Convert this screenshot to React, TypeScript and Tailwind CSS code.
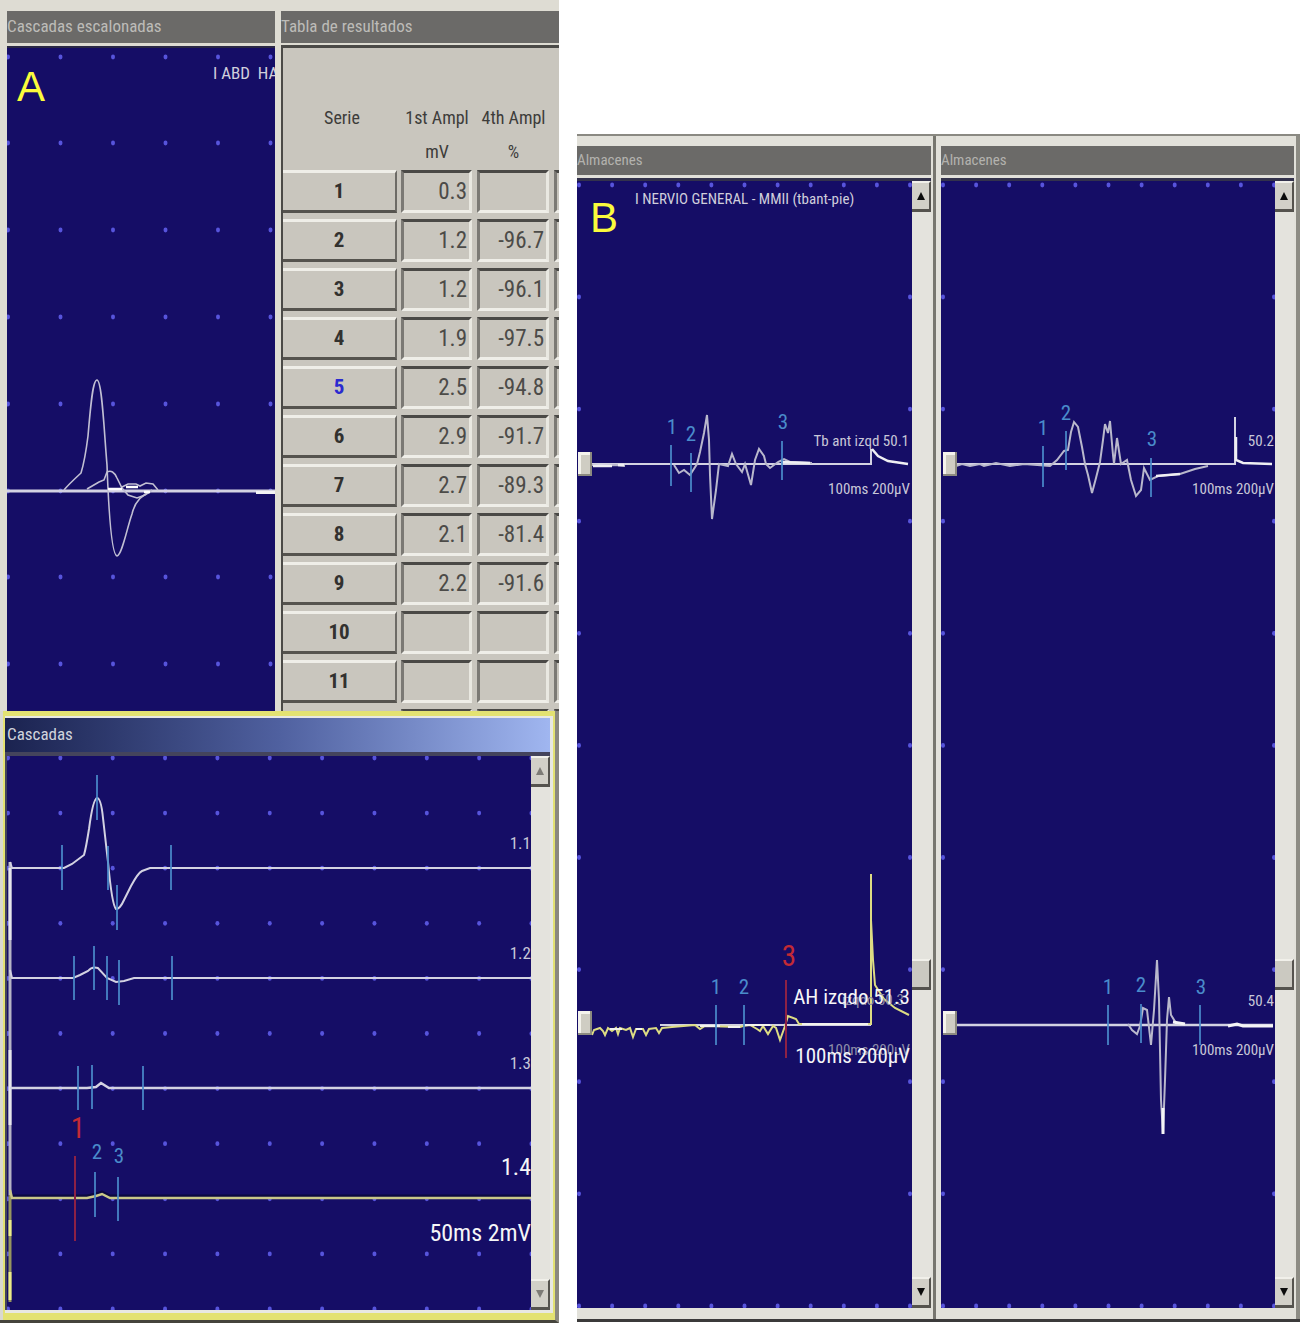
import type { ReactNode } from "react";

import { clsx } from "clsx";

const TRACE = "#d3d2e2";
const MARKER = "#4a8ccb";

const results = [
  { serie: 1, first: "0.3", fourth: "" },
  { serie: 2, first: "1.2", fourth: "-96.7" },
  { serie: 3, first: "1.2", fourth: "-96.1" },
  { serie: 4, first: "1.9", fourth: "-97.5" },
  { serie: 5, first: "2.5", fourth: "-94.8" },
  { serie: 6, first: "2.9", fourth: "-91.7" },
  { serie: 7, first: "2.7", fourth: "-89.3" },
  { serie: 8, first: "2.1", fourth: "-81.4" },
  { serie: 9, first: "2.2", fourth: "-91.6" },
  { serie: 10, first: "", fourth: "" },
  { serie: 11, first: "", fourth: "" },
];

function range(start: number, step: number, count: number) {
  return Array.from({ length: count }, (_, i) => start + step * i);
}

function Dots({ xs, ys }: { xs: number[]; ys: number[] }) {
  return (
    <g fill="#5754dc">
      {ys.map((y) =>
        xs.map((x) => (
          <ellipse key={`${x}-${y}`} cx={x} cy={y} rx="2" ry="2.4" />
        )),
      )}
    </g>
  );
}

// [x, top, bottom]
function Markers({ items }: { items: [number, number, number][] }) {
  return (
    <g stroke={MARKER} strokeWidth="2" strokeOpacity="0.85">
      {items.map(([x, top, bottom]) => (
        <path key={`${x}-${top}`} d={`M${x} ${top}V${bottom}`} />
      ))}
    </g>
  );
}

interface LabelProps {
  x: number;
  y: number;
  size?: "xs" | "sm" | "md" | "lg" | "xl";
  fill?: string;
  anchor?: "start" | "middle" | "end";
  children: ReactNode;
}

function Label({
  x,
  y,
  size = "sm",
  fill = "#c8c7d8",
  anchor = "start",
  children,
}: LabelProps) {
  return (
    <text
      x={x}
      y={y}
      fill={fill}
      textAnchor={anchor}
      className={clsx(
        size === "xs" && "text-[15px]",
        size === "sm" && "text-[17px]",
        size === "md" && "text-[21px]",
        size === "lg" && "text-[24px]",
        size === "xl" && "text-[29px]",
      )}
    >
      {children}
    </text>
  );
}

function PanelLetter({
  x,
  y,
  children,
}: {
  x: number;
  y: number;
  children: string;
}) {
  return (
    <text
      x={x}
      y={y}
      fill="#fbfb3c"
      className="font-['Liberation_Sans',sans-serif] text-[42px]"
    >
      {children}
    </text>
  );
}

function Handle({ x, y }: { x: number; y: number }) {
  return (
    <g>
      <rect x={x} y={y} width="14" height="24" fill="#8c8a80" />
      <rect x={x} y={y} width="12" height="22" fill="#f4f3ec" />
      <rect x={x + 3} y={y + 3} width="9" height="19" fill="#cfcdc3" />
    </g>
  );
}

function Plot({
  viewBox,
  label,
  children,
}: {
  viewBox: string;
  label: string;
  children: ReactNode;
}) {
  return (
    <svg
      viewBox={viewBox}
      role="img"
      aria-label={label}
      className="block h-auto w-full min-w-0 flex-1 bg-[#150d66]"
      fill="none"
    >
      {children}
    </svg>
  );
}

function TitleBar({
  className,
  children,
}: {
  className: string;
  children: ReactNode;
}) {
  return (
    <h2
      className={clsx(
        "flex items-center overflow-hidden whitespace-nowrap",
        className,
      )}
    >
      {children}
    </h2>
  );
}

function ArrowButton({
  direction,
  muted,
}: {
  direction: "up" | "down";
  muted?: boolean;
}) {
  return (
    <button
      type="button"
      aria-label={direction === "up" ? "Subir" : "Bajar"}
      className="flex h-[31px] w-full shrink-0 items-center justify-center border-t-2 border-r-2 border-b-3 border-t-[#f1f0ea] border-r-[#55534e] border-b-[#55534e] bg-[#d2d0c8]"
    >
      <svg viewBox="0 0 10 10" className="h-[10px] w-[10px]">
        <path
          d={direction === "up" ? "M5 1L9 9H1Z" : "M5 9L9 1H1Z"}
          fill={muted ? "#7d7b76" : "#0c0c0c"}
        />
      </svg>
    </button>
  );
}

function ScrollBar({ thumb, muted }: { thumb?: boolean; muted?: boolean }) {
  return (
    <div className="flex w-[19px] shrink-0 flex-col bg-[#e4e3dd]">
      <ArrowButton direction="up" muted={muted} />
      <div className="grow-[749]" />
      {thumb && (
        <button
          type="button"
          aria-label="Desplazar"
          className="h-[31px] w-full border-t-2 border-r-2 border-b-3 border-t-[#f1f0ea] border-r-[#55534e] border-b-[#55534e] bg-[#cbc9c1]"
        />
      )}
      <div className="grow-[288]" />
      <ArrowButton direction="down" muted={muted} />
    </div>
  );
}

function SteppedWindow() {
  return (
    <section className="pt-[11px] pr-[3px] pl-[7px]">
      <TitleBar className="h-8 bg-[#6b6a68] text-[17px] text-[#bdbcb8]">
        Cascadas escalonadas
      </TitleBar>
      <div className="mt-[3px] flex border-t-2 border-[#2a2845]">
        <Plot viewBox="7 48 268 663" label="Cascadas escalonadas">
          <Dots
            xs={range(8, 52.5, 6)}
            ys={[57, 143, 230, 317, 404, 491, 577, 664]}
          />
          <path d="M7 491H275" stroke={TRACE} strokeWidth="3" />
          <path d="M256 492.500H275" stroke="#f2f2f5" strokeWidth="3" />
          <g stroke="#c1bfd3" strokeWidth="1.6">
            <path d="M64 490Q68 485 81 473Q85 460 88 436C91 400 93 380 97 380C102 380 104 430 107 465C109 520 112 555 117 556C122 555 127 528 132 514Q136 497 150 492" />
            <path d="M87 489L99 482L104 480L107 472Q113 469 117 478L122 488L128 495L137 498L145 495L152 490" />
            <path d="M122 487L128 484H136L140 486L146 483L153 484L158 490" />
          </g>
          <path
            d="M108 489H122M126 487H138M144 492H150"
            stroke="#ffffff"
            strokeWidth="2.5"
          />
          <Label x={213} y={79} fill="#d0cfdc">
            I ABD&nbsp; HA
          </Label>
          <PanelLetter x={17} y={101}>
            A
          </PanelLetter>
        </Plot>
      </div>
    </section>
  );
}

function ValueCell({ children }: { children?: ReactNode }) {
  return (
    <td className="h-[49px] p-0 pr-[5px] pb-[6px] align-top">
      <div className="h-[43px] border-3 border-t-[#4a4946] border-r-[#e9e8e1] border-b-[#efeee8] border-l-[#7b7974] pr-[2px] text-right text-[23px] leading-[38px] text-[#4c4b48]">
        {children}
      </div>
    </td>
  );
}

function ResultsWindow() {
  return (
    <section className="flex min-w-0 flex-col pt-[11px] pl-[3px]">
      <TitleBar className="h-8 bg-[#6b6a68] text-[17px] text-[#bdbcb8]">
        Tabla de resultados
      </TitleBar>
      <div className="mt-[2px] flex-1 overflow-hidden border-t-3 border-l-2 border-[#4b4a47] bg-[#c9c6be] contain-size">
        <table className="w-[348px] table-fixed border-collapse">
          <colgroup>
            <col className="w-[118px]" />
            <col className="w-[76px]" />
            <col className="w-[77px]" />
            <col className="w-[77px]" />
          </colgroup>
          <thead>
            <tr className="h-[122px] text-[18px] leading-[34px] text-[#3d3c3a]">
              <th className="pt-[53px] align-top font-normal">Serie</th>
              <th className="pt-[53px] pr-1 align-top font-normal whitespace-nowrap">
                1st Ampl
                <br />
                mV
              </th>
              <th className="pt-[53px] pr-1 align-top font-normal whitespace-nowrap">
                4th Ampl
                <br />%
              </th>
              <th />
            </tr>
          </thead>
          <tbody>
            {results.map(({ serie, first, fourth }) => (
              <tr key={serie}>
                <th className="h-[49px] p-0 pr-1 pb-[6px] align-top">
                  <button
                    type="button"
                    className={clsx(
                      "block h-[43px] w-full border-t-3 border-r-2 border-b-3 border-t-[#efeee8] border-r-[#6d6b66] border-b-[#55534e] text-[21px] font-bold",
                      serie === 5 ? "text-[#2a2ad0]" : "text-[#32312f]",
                    )}
                  >
                    {serie}
                  </button>
                </th>
                <ValueCell>{first}</ValueCell>
                <ValueCell>{fourth}</ValueCell>
                <ValueCell />
              </tr>
            ))}
            <tr>
              <th />
              <ValueCell />
              <ValueCell />
              <ValueCell />
            </tr>
          </tbody>
        </table>
      </div>
    </section>
  );
}

function CascadeWindow() {
  return (
    <section className="border-r-4 border-b-3 border-r-[#8b897f] border-b-[#45443c] bg-[#d9d8d0] pl-[3px]">
      <div className="border-x-2 border-t-5 border-b-7 border-[#e3e272] bg-[#e8e8e2] pt-[2px] pr-[3px] pb-[3px]">
        <TitleBar className="h-[34px] bg-linear-to-r from-[#1b2350] via-[#4f609f] to-[#a0b6f0] pl-[2px] text-[17px] text-[#d0d3dc]">
          Cascadas
        </TitleBar>
        <div className="flex border-t-4 border-l-2 border-[#44445c]">
          <Plot viewBox="7 756 524 554" label="Cascadas">
            <Dots xs={range(8, 52.35, 11)} ys={range(758, 55.1, 11)} />
            <path d="M10 862V1195" stroke="#b5b4c6" strokeWidth="3" />
            <path
              d="M10 868V940M10 1050V1125"
              stroke="#e6e6ec"
              strokeWidth="3"
            />
            <path d="M10 1195V1302" stroke="#96955f" strokeWidth="3" />
            <path
              d="M10 1220V1236M10 1272V1300"
              stroke="#ecec8a"
              strokeWidth="3"
            />
            <path
              d="M10 862L12 868H64L72 864L84 855Q86 848 89 829Q93 799 97 798Q101 798 103 818L108 862Q112 905 116 909Q120 909 124 900L131 886Q138 873 142 871L150 868H531"
              stroke={TRACE}
              strokeWidth="2"
            />
            <path
              d="M10 970L12 978H73L80 975L88 971Q92 966 98 968L107 978L116 982L124 981L134 978H531"
              stroke={TRACE}
              strokeWidth="2"
            />
            <path
              d="M10 1088H87L96 1087L101 1083L109 1088H531"
              stroke={TRACE}
              strokeWidth="2.5"
            />
            <path
              d="M12 1196H87L96 1194L102 1192L110 1196H531"
              stroke="#0b0840"
              strokeWidth="3"
            />
            <path
              d="M10 1190L12 1198H87L96 1196L102 1194L110 1198H531"
              stroke="#cac889"
              strokeWidth="2.5"
            />
            <Markers
              items={[
                [62, 845, 890],
                [97, 775, 820],
                [108, 846, 890],
                [117, 885, 930],
                [171, 845, 890],
                [74, 956, 1000],
                [94, 946, 990],
                [107, 956, 1000],
                [119, 960, 1005],
                [172, 956, 1000],
                [78, 1066, 1110],
                [92, 1065, 1109],
                [143, 1066, 1110],
                [95, 1172, 1217],
                [118, 1177, 1221],
              ]}
            />
            <path d="M75 1156V1241" stroke="#8d2145" strokeWidth="2" />
            <Label x={78} y={1138} size="xl" fill="#c32a35" anchor="middle">
              1
            </Label>
            <Label x={97} y={1159} size="md" fill={MARKER} anchor="middle">
              2
            </Label>
            <Label x={119} y={1163} size="md" fill={MARKER} anchor="middle">
              3
            </Label>
            <Label x={531} y={849} anchor="end">
              1.1
            </Label>
            <Label x={531} y={959} anchor="end">
              1.2
            </Label>
            <Label x={531} y={1069} anchor="end">
              1.3
            </Label>
            <Label x={531} y={1175} size="lg" fill="#f6f6f8" anchor="end">
              1.4
            </Label>
            <Label x={531} y={1241} size="lg" fill="#f6f6f8" anchor="end">
              50ms 2mV
            </Label>
          </Plot>
          <ScrollBar muted />
        </div>
      </div>
    </section>
  );
}

function StoreWindow({
  viewBox,
  label,
  className,
  children,
}: {
  viewBox: string;
  label: string;
  className: string;
  children: ReactNode;
}) {
  return (
    <section
      className={clsx("bg-[#e2e1da] pt-[10px] pr-[2px] pb-[11px]", className)}
    >
      <TitleBar className="h-[29px] bg-[#6b6a68] text-[15px] text-[#b3b2ae]">
        Almacenes
      </TitleBar>
      <div className="mt-[3px] flex border-t-3 border-[#33324c]">
        <Plot viewBox={viewBox} label={label}>
          {children}
        </Plot>
        <ScrollBar thumb />
      </div>
    </section>
  );
}

function StoreDots({ x }: { x: number }) {
  return (
    <>
      <Dots xs={range(x, 33.1, 11)} ys={[185, 1306]} />
      <Dots xs={[x, x + 331]} ys={range(297, 112.1, 9)} />
    </>
  );
}

function LeftStore() {
  return (
    <StoreWindow
      viewBox="577 181 335 1127"
      label="Almacenes, lado izquierdo"
      className="border-r-3 border-[#77766f]"
    >
      <StoreDots x={579} />
      <Label x={635} y={204} size="xs" fill="#d0cfdc">
        I NERVIO GENERAL - MMII (tbant-pie)
      </Label>
      <PanelLetter x={590} y={232}>
        B
      </PanelLetter>

      <Label x={909} y={446} size="xs" anchor="end">
        Tb ant izqd 50.1
      </Label>
      <Label x={910} y={494} size="xs" anchor="end">
        100ms 200µV
      </Label>
      <path d="M592 464H871V449" stroke={TRACE} strokeWidth="2" />
      <path
        d="M592 465L600 466L615 465L625 466M674 465L679 473L684 470L690 475L697 464L700 452L704 433L707 415L709 440L710 475L712 519L716 490L719 464L728 466L732 454L736 464L742 472L745 464L751 485L755 460L759 449L764 456L766 464L770 468L778 462L784 459L790 462L812 463"
        stroke="#b9b8cc"
        strokeWidth="2"
      />
      <path
        d="M593 466H612M618 465H624M781 462L810 463M872 449L878 456L888 461L908 464"
        stroke="#efeff3"
        strokeWidth="2.5"
      />
      <Markers
        items={[
          [671, 445, 486],
          [691, 453, 492],
          [782, 441, 480],
        ]}
      />
      <Label x={672} y={434} size="md" fill={MARKER} anchor="middle">
        1
      </Label>
      <Label x={691} y={441} size="md" fill={MARKER} anchor="middle">
        2
      </Label>
      <Label x={783} y={429} size="md" fill={MARKER} anchor="middle">
        3
      </Label>
      <Handle x={578} y={452} />

      <path d="M660 1025H871" stroke={TRACE} strokeWidth="2" />
      <path
        d="M592 1035L594 1030L600 1028L603 1031L605 1035L608 1028L612 1031L616 1028L618 1034L620 1028L626 1030L630 1028L633 1037L636 1029L643 1029L646 1035L649 1029L656 1028L659 1033L662 1028L672 1027L695 1025L700 1029L705 1026L740 1027L743 1026L750 1025L757 1029L760 1031L763 1026L768 1034L773 1026L776 1028L780 1040L785 1026L788 1016L796 1019L799 1024H871V874M871 920L873 960L875 985L884 999L895 1008L909 1015"
        stroke="#dddc83"
        strokeWidth="2"
      />
      <path
        d="M610 1029H622M636 1029H642M700 1026H720M728 1027H740M745 1025H770M802 1024H868"
        stroke="#f3f3ed"
        strokeWidth="2"
      />
      <path d="M786 980V1058" stroke="#8d2145" strokeWidth="2" />
      <Markers
        items={[
          [716, 1005, 1045],
          [744, 1005, 1045],
        ]}
      />
      <Label x={716} y={994} size="md" fill={MARKER} anchor="middle">
        1
      </Label>
      <Label x={744} y={994} size="md" fill={MARKER} anchor="middle">
        2
      </Label>
      <Label x={789} y={966} size="xl" fill="#c32a35" anchor="middle">
        3
      </Label>
      <Label x={904} y={1005} size="xs" fill="#8e8da8" anchor="end">
        izqdo 50.3
      </Label>
      <Label x={910} y={1055} size="xs" fill="#8e8da8" anchor="end">
        100ms 200µV
      </Label>
      <Label x={910} y={1004} size="md" fill="#f6f6f8" anchor="end">
        AH izqdo 51.3
      </Label>
      <Label x={910} y={1063} size="md" fill="#f6f6f8" anchor="end">
        100ms 200µV
      </Label>
      <Handle x={578} y={1011} />
    </StoreWindow>
  );
}

function RightStore() {
  return (
    <StoreWindow
      viewBox="941 181 334 1127"
      label="Almacenes, lado derecho"
      className="border-r-4 border-[#8d8c84] pl-[5px]"
    >
      <StoreDots x={943} />

      <Label x={1274} y={446} size="xs" anchor="end">
        50.2
      </Label>
      <Label x={1274} y={494} size="xs" anchor="end">
        100ms 200µV
      </Label>
      <path d="M956 464H1235V417" stroke={TRACE} strokeWidth="2" />
      <path
        d="M956 466L962 464L970 466L980 464L984 466L996 463L1010 466L1024 464L1050 466L1057 460L1064 451L1068 450L1071 432L1074 422L1078 427L1082 447L1085 464L1088 475L1092 493L1096 478L1100 462L1103 440L1105 424L1108 433L1110 421L1113 455L1114 464L1117 438L1121 464L1127 460L1131 480L1136 496L1141 490L1144 468L1150 480L1158 476L1180 474L1195 469L1208 466"
        stroke="#b9b8cc"
        strokeWidth="2"
      />
      <path
        d="M1236 437V460L1243 463L1272 464M1156 476L1180 474"
        stroke="#efeff3"
        strokeWidth="2.5"
      />
      <Markers
        items={[
          [1043, 446, 487],
          [1066, 431, 470],
          [1151, 458, 497],
        ]}
      />
      <Label x={1043} y={435} size="md" fill={MARKER} anchor="middle">
        1
      </Label>
      <Label x={1066} y={420} size="md" fill={MARKER} anchor="middle">
        2
      </Label>
      <Label x={1152} y={446} size="md" fill={MARKER} anchor="middle">
        3
      </Label>
      <Handle x={943} y={452} />

      <Label x={1274} y={1006} size="xs" anchor="end">
        50.4
      </Label>
      <Label x={1274} y={1055} size="xs" anchor="end">
        100ms 200µV
      </Label>
      <path d="M956 1025H1273" stroke={TRACE} strokeWidth="2.5" />
      <path
        d="M1128 1024L1132 1030L1137 1034L1140 1026L1143 1008L1147 1010L1151 1045L1154 1010L1157 960L1159 1000L1161 1100L1163 1134L1165 1080L1167 1020L1169 997L1171 1015L1176 1023L1185 1024"
        stroke="#b9b8cc"
        strokeWidth="2"
      />
      <path
        d="M1163 1108V1134M1173 1022L1185 1024M1228 1026L1237 1024L1243 1026H1273"
        stroke="#f4f4f6"
        strokeWidth="3"
      />
      <Markers
        items={[
          [1108, 1005, 1045],
          [1141, 1004, 1043],
          [1200, 1005, 1045],
        ]}
      />
      <Label x={1108} y={994} size="md" fill={MARKER} anchor="middle">
        1
      </Label>
      <Label x={1141} y={992} size="md" fill={MARKER} anchor="middle">
        2
      </Label>
      <Label x={1201} y={994} size="md" fill={MARKER} anchor="middle">
        3
      </Label>
      <Handle x={943} y={1011} />
    </StoreWindow>
  );
}

export default function App() {
  return (
    <main className="grid grid-cols-[559fr_723fr] items-start gap-[18px] bg-white font-['Roboto_Condensed','Liberation_Sans',sans-serif]">
      <div className="min-w-0 bg-[#dedcd3]">
        <div className="grid grid-cols-[278fr_281fr]">
          <SteppedWindow />
          <ResultsWindow />
        </div>
        <CascadeWindow />
      </div>

      <div className="mt-[134px] grid min-w-0 grid-cols-[359fr_364fr] border-t-2 border-b-3 border-t-[#8a8982] border-b-[#3b3a3a]">
        <LeftStore />
        <RightStore />
      </div>
    </main>
  );
}
